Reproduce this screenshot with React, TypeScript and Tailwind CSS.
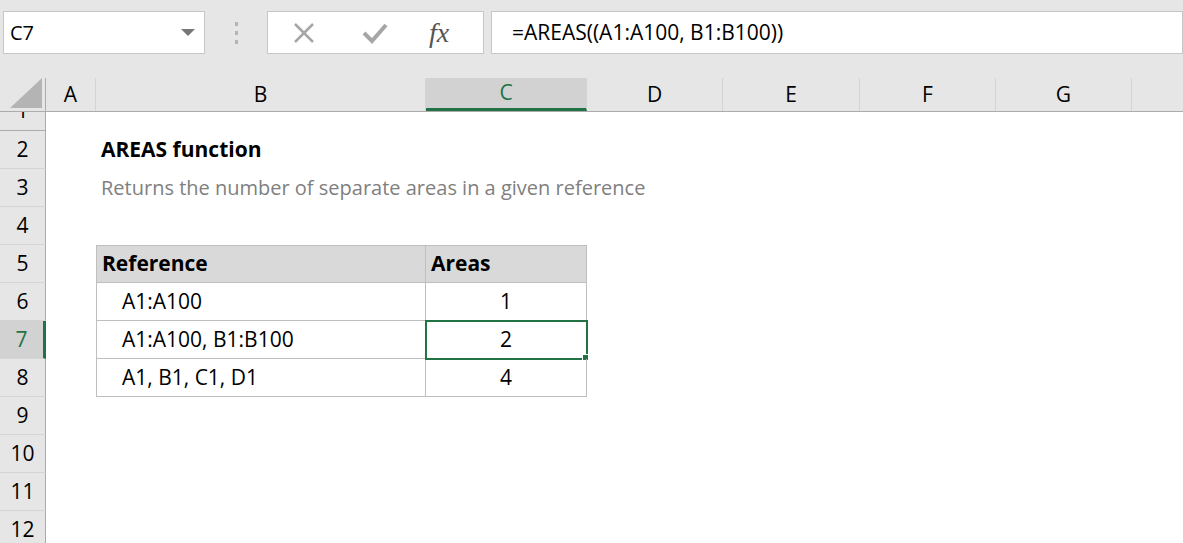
const cols = [
  { n: 'A', w: 50 },
  { n: 'B', w: 330 },
  { n: 'C', w: 161 },
  { n: 'D', w: 136 },
  { n: 'E', w: 137 },
  { n: 'F', w: 136 },
  { n: 'G', w: 136 },
  { n: '', w: 60 },
];

const rows = [2, 3, 4, 5, 6, 7, 8, 9, 10, 11, 12];

function Cell({ w, className = '', children }: { w: number; className?: string; children?: React.ReactNode }) {
  return (
    <div style={{ width: w }} className={`h-full shrink-0 flex items-center ${className}`}>
      {children}
    </div>
  );
}

function RowContent({ r }: { r: number }) {
  if (r === 2)
    return (
      <>
        <Cell w={50} />
        <Cell w={330} className="pl-[5px] font-bold text-[21px] text-black">AREAS function</Cell>
      </>
    );
  if (r === 3)
    return (
      <>
        <Cell w={50} />
        <Cell w={700} className="pl-[5px] text-[20px] text-[#808080] whitespace-nowrap">
          Returns the number of separate areas in a given reference
        </Cell>
      </>
    );
  if (r === 5)
    return (
      <>
        <Cell w={50} />
        <Cell w={330} className="pl-[5px] font-bold text-[21px] bg-[#d9d9d9] border border-[#bfbfbf]">Reference</Cell>
        <Cell w={161} className="pl-[5px] font-bold text-[21px] bg-[#d9d9d9] border border-l-0 border-[#bfbfbf]">Areas</Cell>
      </>
    );
  const data: Record<number, [string, string]> = {
    6: ['A1:A100', '1'],
    7: ['A1:A100, B1:B100', '2'],
    8: ['A1, B1, C1, D1', '4'],
  };
  if (data[r])
    return (
      <>
        <Cell w={50} />
        <Cell w={330} className="pl-[25px] text-[21px] border border-t-0 border-[#bfbfbf]">{data[r][0]}</Cell>
        <Cell
          w={161}
          className={`justify-center text-[21px] border border-t-0 border-l-0 border-[#bfbfbf] relative ${r === 7 ? 'outline-2 outline-[#217346] -outline-offset-1' : ''}`}
        >
          {data[r][1]}
          {r === 7 && <span className="absolute -right-[3px] -bottom-[3px] w-[7px] h-[7px] bg-[#217346] border border-white" />}
        </Cell>
      </>
    );
  return null;
}

export default function App() {
  return (
    <div className="w-[1183px] h-[543px] overflow-hidden bg-white text-black" style={{ fontFamily: '"Open Sans", sans-serif' }}>
      <div className="h-[78px] bg-[#e6e6e6] flex items-start pt-[11px] gap-0">
        <div className="ml-[3px] shrink-0 w-[202px] h-[43px] bg-white border border-[#c6c6c6] flex items-center justify-between px-[6px]">
          <span className="text-[20px]">C7</span>
          <span className="w-0 h-0 border-x-[7px] border-x-transparent border-t-[7px] border-t-[#777] mr-[3px]" />
        </div>
        <div className="w-[62px] shrink-0 h-[43px] flex flex-col items-center justify-center gap-[5px]">
          <span className="w-[3px] h-[4px] bg-[#b4b4b4]" />
          <span className="w-[3px] h-[4px] bg-[#b4b4b4]" />
          <span className="w-[3px] h-[4px] bg-[#b4b4b4]" />
        </div>
        <div className="w-[217px] shrink-0 h-[43px] bg-white border border-[#c6c6c6] flex items-center">
          <svg width="26" height="26" viewBox="0 0 26 26" className="ml-[23px]">
            <path d="M4 4 L22 22 M22 4 L4 22" stroke="#a6a6a6" strokeWidth="2.5" />
          </svg>
          <svg width="28" height="26" viewBox="0 0 28 26" className="ml-[44px]">
            <path d="M3 13 L11 21 L25 5" stroke="#a6a6a6" strokeWidth="4" fill="none" />
          </svg>
          <span className="ml-[40px] text-[28px] italic text-[#555]" style={{ fontFamily: '"Liberation Serif", serif' }}>fx</span>
        </div>
        <div className="ml-[7px] flex-1 h-[43px] bg-white border border-[#c6c6c6] flex items-center pl-[20px] text-[21px]">
          =AREAS((A1:A100, B1:B100))
        </div>
      </div>
      <div className="h-[34px] flex bg-[#e6e6e6] border-b border-[#ababab]">
        <div className="w-[46px] shrink-0 h-full border-r border-[#ababab] flex items-end justify-end p-[3px]">
          <svg width="32" height="30" viewBox="0 0 32 30"><path d="M32 0 L32 30 L0 30 Z" fill="#b4b4b4" /></svg>
        </div>
        {cols.map((c, i) => (
          <div
            key={i}
            style={{ width: c.w }}
            className={`h-full shrink-0 flex items-center justify-center text-[21px] border-r border-[#d4d4d4] ${
              c.n === 'C' ? 'bg-[#d2d2d2] text-[#217346] border-b-[3px] border-b-[#217346]' : ''
            }`}
          >
            {c.n}
          </div>
        ))}
      </div>
      <div className="flex h-[19px]">
        <div className="w-[46px] shrink-0 bg-[#e6e6e6] border-r border-b border-[#ababab] flex justify-center overflow-hidden">
          <span className="text-[21px] leading-none -mt-[12px]">1</span>
        </div>
      </div>
      {rows.map((r) => (
        <div key={r} className="flex h-[38px]">
          <div
            className={`w-[46px] shrink-0 h-full border-b border-[#d4d4d4] flex items-center justify-center text-[21px] ${
              r === 7 ? 'bg-[#d2d2d2] text-[#217346] border-r-[3px] border-r-[#217346]' : 'bg-[#e6e6e6] border-r border-r-[#ababab]'
            }`}
          >
            {r}
          </div>
          <div className="flex h-full">
            <RowContent r={r} />
          </div>
        </div>
      ))}
    </div>
  );
}
